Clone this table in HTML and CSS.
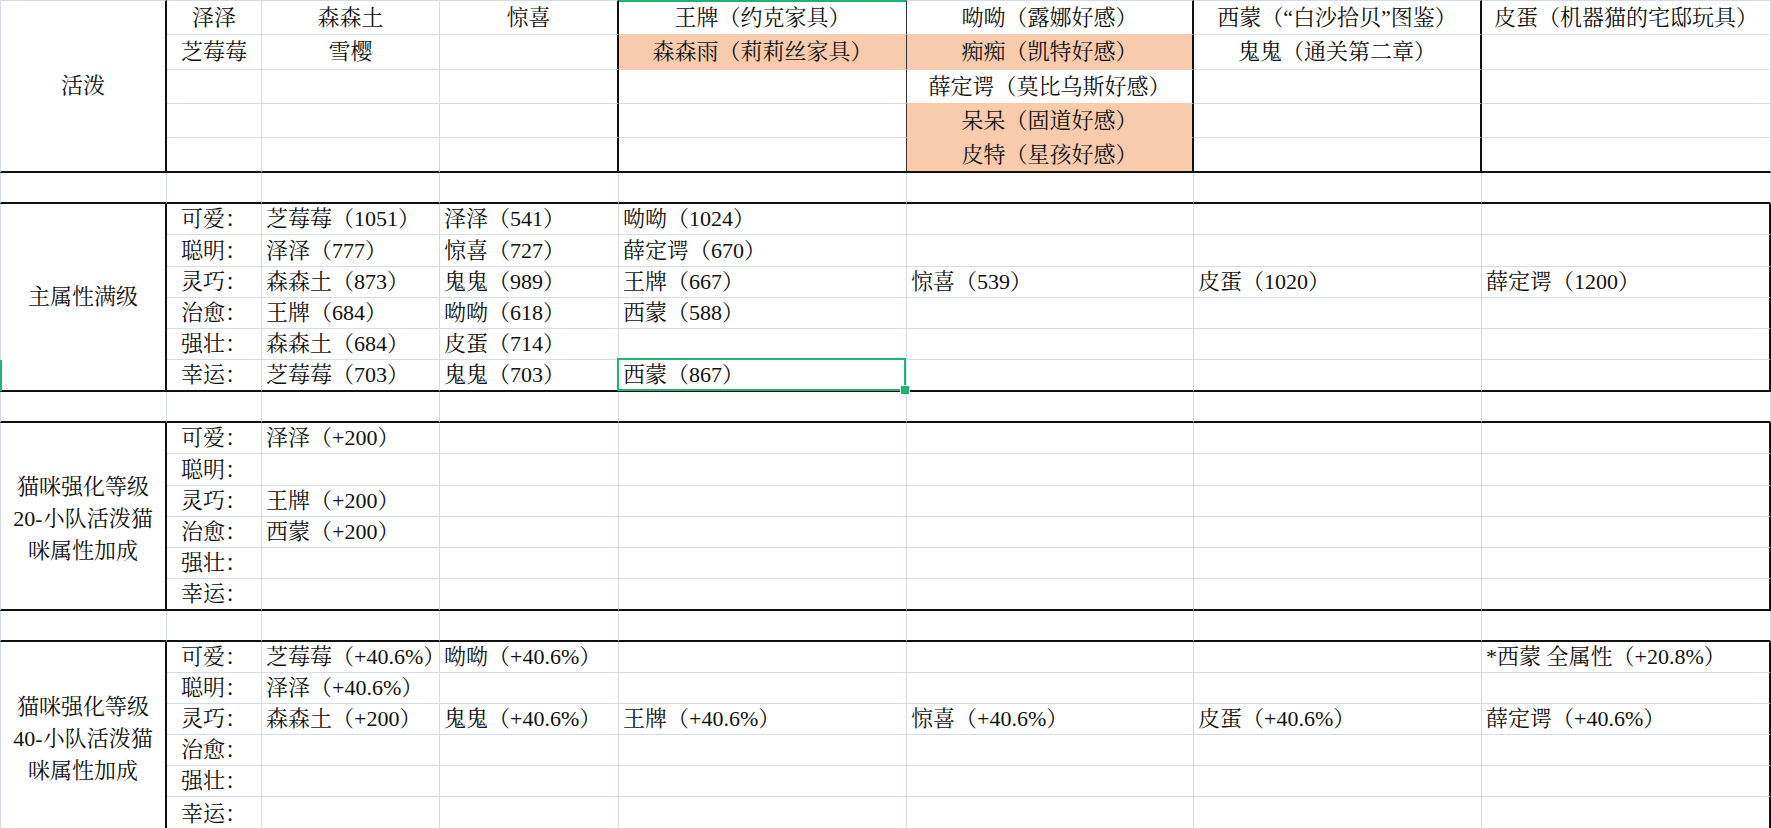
FILE: index.html
```html
<!DOCTYPE html>
<html lang="zh-CN">
<head>
<meta charset="utf-8">
<title>活泼猫咪</title>
<link rel="stylesheet" href="styles.css">
</head>
<body>
<div class="sheet">
<table class="grid">
<colgroup>
<col class="w-a"><col class="w-b"><col class="w-c"><col class="w-d"><col class="w-e"><col class="w-f"><col class="w-g"><col class="w-h">
</colgroup>
<tbody>
<tr class="r35 first">
<td class="lab end-b" rowspan="5">活泼</td>
<td class="c">泽泽</td>
<td class="c">森森土</td>
<td class="c tk">惊喜</td>
<td class="c tk1 colsel fb">王牌（约克家具）</td>
<td class="c tk fb">呦呦（露娜好感）</td>
<td class="c tk">西蒙（“白沙拾贝”图鉴）</td>
<td class="c">皮蛋（机器猫的宅邸玩具）</td>
</tr>
<tr class="r35">
<td class="c">芝莓莓</td>
<td class="c">雪樱</td>
<td class="c tk"></td>
<td class="c tk1 fill fb">森森雨（莉莉丝家具）</td>
<td class="c tk fill fb">痴痴（凯特好感）</td>
<td class="c tk">鬼鬼（通关第二章）</td>
<td class="c"></td>
</tr>
<tr class="r34">
<td class="c"></td>
<td class="c"></td>
<td class="c tk"></td>
<td class="c tk1"></td>
<td class="c tk fb">薛定谔（莫比乌斯好感）</td>
<td class="c tk"></td>
<td class="c"></td>
</tr>
<tr class="r34">
<td class="c"></td>
<td class="c"></td>
<td class="c tk"></td>
<td class="c tk1"></td>
<td class="c tk fill fb">呆呆（固道好感）</td>
<td class="c tk"></td>
<td class="c"></td>
</tr>
<tr class="r35 end">
<td class="c"></td>
<td class="c"></td>
<td class="c tk"></td>
<td class="c tk1"></td>
<td class="c tk fill">皮特（星孩好感）</td>
<td class="c tk"></td>
<td class="c"></td>
</tr>

<tr class="r31 gap">
<td class="edge"></td><td></td><td></td><td></td><td></td><td></td><td></td><td></td>
</tr>

<tr class="r31">
<td class="lab end-b" rowspan="6">主属性满级</td>
<td class="attr">可爱：</td>
<td class="l">芝莓莓（1051）</td>
<td class="l">泽泽（541）</td>
<td class="l">呦呦（1024）</td>
<td class="l"></td>
<td class="l"></td>
<td class="l rt">&nbsp;</td>
</tr>
<tr class="r32">
<td class="attr">聪明：</td>
<td class="l">泽泽（777）</td>
<td class="l">惊喜（727）</td>
<td class="l">薛定谔（670）</td>
<td class="l"></td>
<td class="l"></td>
<td class="l rt"></td>
</tr>
<tr class="r31">
<td class="attr">灵巧：</td>
<td class="l">森森土（873）</td>
<td class="l">鬼鬼（989）</td>
<td class="l">王牌（667）</td>
<td class="l">惊喜（539）</td>
<td class="l">皮蛋（1020）</td>
<td class="l rt">薛定谔（1200）</td>
</tr>
<tr class="r31">
<td class="attr">治愈：</td>
<td class="l">王牌（684）</td>
<td class="l">呦呦（618）</td>
<td class="l">西蒙（588）</td>
<td class="l"></td>
<td class="l"></td>
<td class="l rt"></td>
</tr>
<tr class="r31">
<td class="attr">强壮：</td>
<td class="l">森森土（684）</td>
<td class="l">皮蛋（714）</td>
<td class="l"></td>
<td class="l"></td>
<td class="l"></td>
<td class="l rt"></td>
</tr>
<tr class="r32 end">
<td class="attr">幸运：</td>
<td class="l">芝莓莓（703）</td>
<td class="l">鬼鬼（703）</td>
<td class="l sel">西蒙（867）<span class="selbox"><span class="handle"></span></span></td>
<td class="l"></td>
<td class="l"></td>
<td class="l rt"></td>
</tr>

<tr class="r31 gap">
<td class="edge"></td><td></td><td></td><td></td><td></td><td></td><td></td><td></td>
</tr>

<tr class="r31">
<td class="lab lab3 end-b" rowspan="6">猫咪强化等级<br>20-小队活泼猫<br>咪属性加成</td>
<td class="attr">可爱：</td>
<td class="l">泽泽（+200）</td>
<td class="l"></td>
<td class="l"></td>
<td class="l"></td>
<td class="l"></td>
<td class="l rt"></td>
</tr>
<tr class="r32">
<td class="attr">聪明：</td>
<td class="l"></td><td class="l"></td><td class="l"></td><td class="l"></td><td class="l"></td><td class="l rt"></td>
</tr>
<tr class="r31">
<td class="attr">灵巧：</td>
<td class="l">王牌（+200）</td>
<td class="l"></td><td class="l"></td><td class="l"></td><td class="l"></td><td class="l rt"></td>
</tr>
<tr class="r31">
<td class="attr">治愈：</td>
<td class="l">西蒙（+200）</td>
<td class="l"></td><td class="l"></td><td class="l"></td><td class="l"></td><td class="l rt"></td>
</tr>
<tr class="r31">
<td class="attr">强壮：</td>
<td class="l"></td><td class="l"></td><td class="l"></td><td class="l"></td><td class="l"></td><td class="l rt"></td>
</tr>
<tr class="r32 end">
<td class="attr">幸运：</td>
<td class="l"></td><td class="l"></td><td class="l"></td><td class="l"></td><td class="l"></td><td class="l rt"></td>
</tr>

<tr class="r31 gap">
<td class="edge"></td><td></td><td></td><td></td><td></td><td></td><td></td><td></td>
</tr>

<tr class="r31">
<td class="lab lab3" rowspan="6">猫咪强化等级<br>40-小队活泼猫<br>咪属性加成</td>
<td class="attr">可爱：</td>
<td class="l">芝莓莓（+40.6%）</td>
<td class="l">呦呦（+40.6%）</td>
<td class="l"></td>
<td class="l"></td>
<td class="l"></td>
<td class="l rt">*西蒙 全属性（+20.8%）</td>
</tr>
<tr class="r31">
<td class="attr">聪明：</td>
<td class="l">泽泽（+40.6%）</td>
<td class="l"></td><td class="l"></td><td class="l"></td><td class="l"></td><td class="l rt"></td>
</tr>
<tr class="r31">
<td class="attr">灵巧：</td>
<td class="l">森森土（+200）</td>
<td class="l">鬼鬼（+40.6%）</td>
<td class="l">王牌（+40.6%）</td>
<td class="l">惊喜（+40.6%）</td>
<td class="l">皮蛋（+40.6%）</td>
<td class="l rt">薛定谔（+40.6%）</td>
</tr>
<tr class="r31">
<td class="attr">治愈：</td>
<td class="l"></td><td class="l"></td><td class="l"></td><td class="l"></td><td class="l"></td><td class="l rt"></td>
</tr>
<tr class="r31">
<td class="attr">强壮：</td>
<td class="l"></td><td class="l"></td><td class="l"></td><td class="l"></td><td class="l"></td><td class="l rt"></td>
</tr>
<tr class="r34">
<td class="attr">幸运：</td>
<td class="l"></td><td class="l"></td><td class="l"></td><td class="l"></td><td class="l"></td><td class="l rt"></td>
</tr>
</tbody>
</table>
<div class="rowmark"></div>
</div>
</body>
</html>
```

FILE: styles.css
```css
:root {
  --grid: #d5dbe8;
  --ink: #111111;
  --thick: #111111;
  --salmon: #f8cbad;
  --green: #20b474;
}

html, body {
  margin: 0;
  padding: 0;
  background: #ffffff;
  height: 828px;
  overflow: hidden;
}

body {
  font-family: "Liberation Serif", "Noto Serif CJK SC", "Source Han Serif SC", "Noto Sans CJK SC", serif;
  font-size: 22px;
  color: var(--ink);
}

.sheet {
  position: relative;
  width: 1771px;
}

.grid {
  width: 1771px;
  table-layout: fixed;
  border-collapse: separate;
  border-spacing: 0;
}

.w-a { width: 167px; }
.w-b { width: 95px; }
.w-c { width: 178px; }
.w-d { width: 179px; }
.w-e { width: 288px; }
.w-f { width: 287px; }
.w-g { width: 288px; }
.w-h { width: 289px; }

.r31 { height: 31px; }
.r32 { height: 32px; }
.r34 { height: 34px; }
.r35 { height: 35px; }

.grid td {
  border-right: 1px solid var(--grid);
  border-bottom: 1px solid var(--grid);
  padding: 0 4px;
  line-height: 26px;
  white-space: nowrap;
  overflow: visible;
  vertical-align: middle;
}

.first td { border-top: 1px solid var(--grid); }
.first td.colsel { border-top: 2px solid var(--green); }

.c { text-align: center; }
.l { text-align: left; }
.attr { text-align: center; padding: 0; }

.grid td.lab {
  text-align: center;
  border-left: 1px solid var(--grid);
  border-right: 2px solid var(--thick);
  border-bottom: 2px solid var(--thick);
  padding: 0;
}

.grid td.lab3 {
  white-space: normal;
  line-height: 32px;
  padding-top: 6px;
}

.grid td.edge { border-left: 1px solid var(--grid); }

.grid td.tk { border-right: 2px solid var(--thick); }
.grid td.tk1 { border-right: 1px solid #333333; }
.grid td.rt { border-right: 2px solid var(--thick); }

.grid td.fill { background: var(--salmon); }
.grid td.fb { border-bottom-color: var(--salmon); }

.grid .end td,
.grid .gap td { border-bottom: 2px solid var(--thick); }

.grid td.sel { position: relative; }

.selbox {
  position: absolute;
  left: -2px;
  top: -2px;
  right: 0;
  bottom: -1px;
  border: 2px solid var(--green);
  pointer-events: none;
}

.handle {
  position: absolute;
  right: -6px;
  bottom: -6px;
  width: 8px;
  height: 8px;
  background: var(--green);
  border: 1px solid #ffffff;
}

.rowmark {
  position: absolute;
  left: 0;
  top: 360px;
  width: 2px;
  height: 31px;
  background: var(--green);
}
```
